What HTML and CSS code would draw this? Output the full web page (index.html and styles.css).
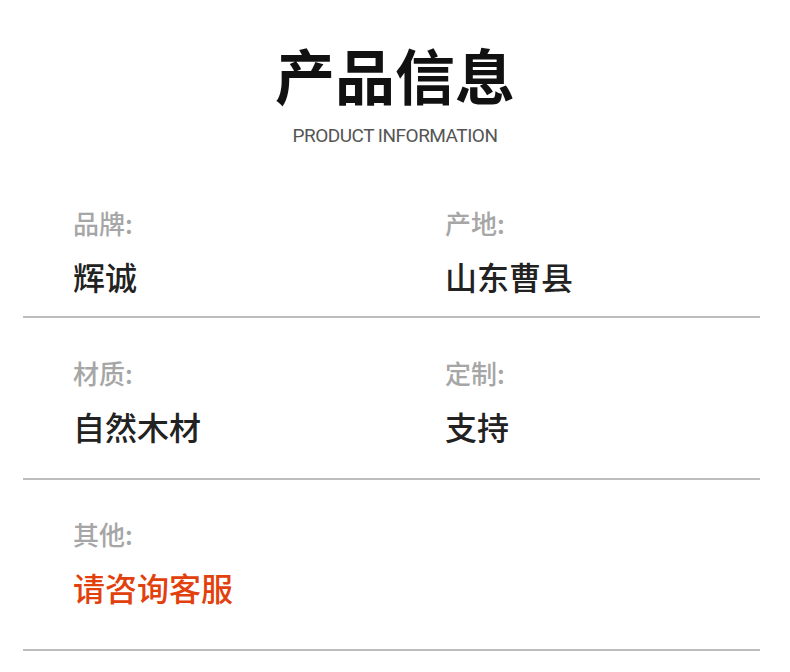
FILE: index.html
```html
<!DOCTYPE html>
<html lang="zh-CN">

<head>
    <meta charset="UTF-8">
    <meta name="viewport" content="width=device-width, initial-scale=1.0">
    <title>产品信息</title>
    <link rel="stylesheet" href="styles.css">
</head>

<body>
    <div class="header">
        <h1 class="title">产品信息</h1>
        <p class="subtitle">PRODUCT INFORMATION</p>
    </div>

    <div class="info">
        <div class="row row-first">
            <div class="cell">
                <div class="label">品牌:</div>
                <div class="value">辉诚</div>
            </div>
            <div class="cell">
                <div class="label">产地:</div>
                <div class="value">山东曹县</div>
            </div>
        </div>
        <div class="row">
            <div class="cell">
                <div class="label">材质:</div>
                <div class="value">自然木材</div>
            </div>
            <div class="cell">
                <div class="label">定制:</div>
                <div class="value">支持</div>
            </div>
        </div>
        <div class="row row-last">
            <div class="cell">
                <div class="label">其他:</div>
                <div class="value highlight">请咨询客服</div>
            </div>
        </div>
    </div>
</body>

</html>
```

FILE: styles.css
```css
body {
    font-family: "Noto Sans CJK SC", "Noto Sans", sans-serif;
    margin: 0;
    background: #fff;
}

.header {
    text-align: center;
    padding-top: 44px;
    padding-bottom: 61px;
}

.title {
    margin: 0;
    font-size: 60px;
    line-height: 60px;
    font-weight: 700;
    color: #111;
}

.subtitle {
    margin: 21px 0 0;
    font-family: Roboto, "Liberation Sans", sans-serif;
    font-size: 19px;
    line-height: 22px;
    letter-spacing: -0.5px;
    color: #555;
}

.info {
    margin: 0 30px 0 23px;
}

.row {
    display: grid;
    grid-template-columns: 372px 1fr;
    padding: 40px 0 34px 50px;
    border-bottom: 2px solid #bdbdbd;
}

.row-first {
    padding-top: 0;
    padding-bottom: 22px;
}

.row-last {
    padding-top: 39px;
    padding-bottom: 44px;
}

.label {
    font-size: 26px;
    line-height: 30px;
    font-weight: 500;
    color: #a6a6a6;
}

.value {
    margin-top: 20px;
    font-size: 32px;
    line-height: 36px;
    font-weight: 500;
    color: #222;
}

.highlight {
    color: #e2400c;
}
```
